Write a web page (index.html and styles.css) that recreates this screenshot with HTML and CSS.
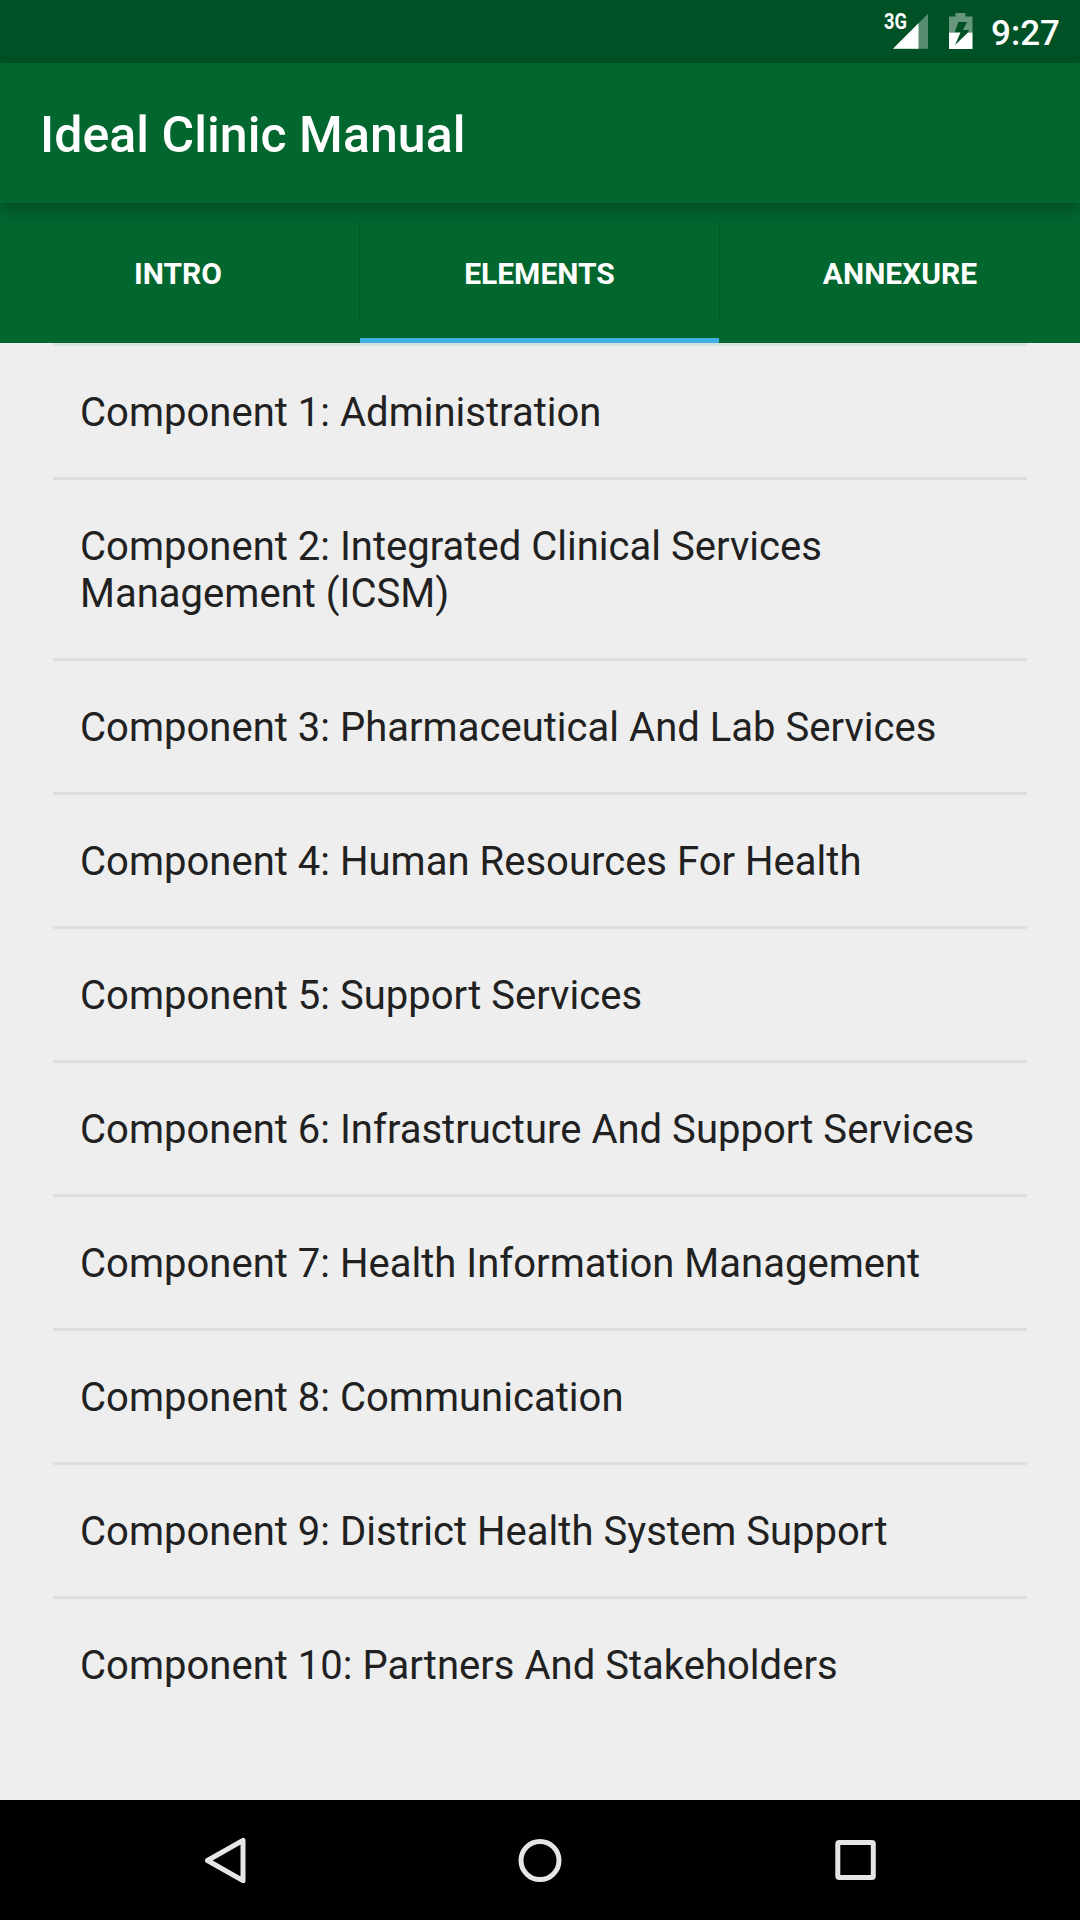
FILE: index.html
```html
<!DOCTYPE html>
<html lang="en">
<head>
<meta charset="utf-8">
<title>Ideal Clinic Manual</title>
<link rel="stylesheet" href="styles.css">
</head>
<body>
<div class="screen">
  <div class="status-bar">
    <svg class="signal" width="50" height="42" viewBox="-4 -4 50 42">
      <path d="M10 36.700 45 1.700V36.700Z" fill="#fff" fill-opacity=".35"/>
      <path d="M10 36.700 35.500 11.200V36.700Z" fill="#fff"/>
      <text class="network" x="1" y="17" textLength="23" lengthAdjust="spacingAndGlyphs">3G</text>
    </svg>
    <svg class="battery" width="24" height="36" viewBox="0 0 24 36">
      <path fill="#fff" fill-opacity=".4" d="M6.500 0h10v3.500h7v16h-4.500l1-2.500h-6l4-8H9.500l-4 10.500H0v-16h6.500z"/>
      <path fill="#fff" d="M0 19.500h11.500L6 32l13-12.500h4.500V36H0z"/>
    </svg>
    <span class="time">9:27</span>
  </div>
  <header class="app-bar"><h1 class="title">Ideal Clinic Manual</h1></header>
  <nav class="tabs">
    <a class="tab">INTRO</a>
    <a class="tab active">ELEMENTS</a>
    <a class="tab">ANNEXURE</a>
  </nav>
  <main class="content">
    <ul class="list">
      <li class="item">Component 1: Administration</li>
      <li class="item">Component 2: Integrated Clinical Services Management (ICSM)</li>
      <li class="item">Component 3: Pharmaceutical And Lab Services</li>
      <li class="item">Component 4: Human Resources For Health</li>
      <li class="item">Component 5: Support Services</li>
      <li class="item">Component 6: Infrastructure And Support Services</li>
      <li class="item">Component 7: Health Information Management</li>
      <li class="item">Component 8: Communication</li>
      <li class="item">Component 9: District Health System Support</li>
      <li class="item">Component 10: Partners And Stakeholders</li>
    </ul>
  </main>
  <footer class="nav-bar">
    <svg class="nav-icon" width="60" height="60" viewBox="0 0 60 60"><path d="M12.500 30.500 48 10.300V50.700Z"/></svg>
    <svg class="nav-icon" width="60" height="60" viewBox="0 0 60 60"><circle cx="30" cy="30.500" r="19"/></svg>
    <svg class="nav-icon" width="60" height="60" viewBox="0 0 60 60"><rect x="12.800" y="12.500" width="35.500" height="35" rx="1.500"/></svg>
  </footer>
</div>
</body>
</html>
```
FILE: styles.css
```css
* {
  box-sizing: border-box;
}

body {
  margin: 0;
  font-family: Roboto, sans-serif;
}

.screen {
  width: 1080px;
  height: 1920px;
  display: flex;
  flex-direction: column;
  background: #eee;
  overflow: hidden;
}

.status-bar {
  height: 63px;
  flex: none;
  display: flex;
  justify-content: flex-end;
  align-items: flex-start;
  padding: 8px 20px 0 0;
  background: #005126;
  color: #fff;
}

.signal {
  margin-right: 20px;
}

.network {
  font-size: 21.5px;
  font-weight: 700;
  fill: #fff;
}

.battery {
  margin: 5px 18px 0 0;
}

.time {
  margin-top: 5px;
  font-size: 35px;
  font-weight: 500;
  line-height: 41px;
}

.app-bar {
  height: 140px;
  flex: none;
  display: flex;
  align-items: center;
  padding: 4px 40px 0;
  background: #02662f;
  position: relative;
  z-index: 1;
  box-shadow: 0 7px 14px rgba(0, 0, 0, .27);
}

.title {
  margin: 0;
  font-size: 50px;
  font-weight: 500;
  line-height: 59px;
  letter-spacing: .05px;
  color: #fff;
}

.tabs {
  height: 140px;
  flex: none;
  display: grid;
  grid-template-columns: 360px 359px 361px;
  background: linear-gradient(#005a2a, #005a2a) 359px 20px / 1px 100px no-repeat,
    linear-gradient(#005a2a, #005a2a) 719px 20px / 1px 100px no-repeat, #02662f;
}

.tab {
  display: flex;
  align-items: center;
  justify-content: center;
  padding-top: 5px;
  border-bottom: 5px solid transparent;
  color: #fff;
  font-size: 30px;
  font-weight: 700;
}

.tab:first-child {
  padding-right: 4px;
}

.tab:last-child {
  padding-left: 1px;
}

.active {
  border-bottom-color: #3fb0ea;
}

.content {
  flex: 1;
  padding: 0 53px;
}

.list {
  margin: 0;
  padding: 0;
  list-style: none;
}

.item {
  padding: 43px 27px 41px;
  border-top: 3px solid #dedede;
  font-size: 40px;
  line-height: 47px;
  letter-spacing: .02px;
  color: #212121;
}

.item:first-child {
  border-top-color: #d3e2da;
}

.nav-bar {
  height: 120px;
  flex: none;
  display: flex;
  align-items: center;
  justify-content: center;
  gap: 255px;
  background: #000;
}

.nav-icon {
  fill: none;
  stroke: #e6e6e6;
  stroke-width: 5;
  stroke-linejoin: round;
}
```
